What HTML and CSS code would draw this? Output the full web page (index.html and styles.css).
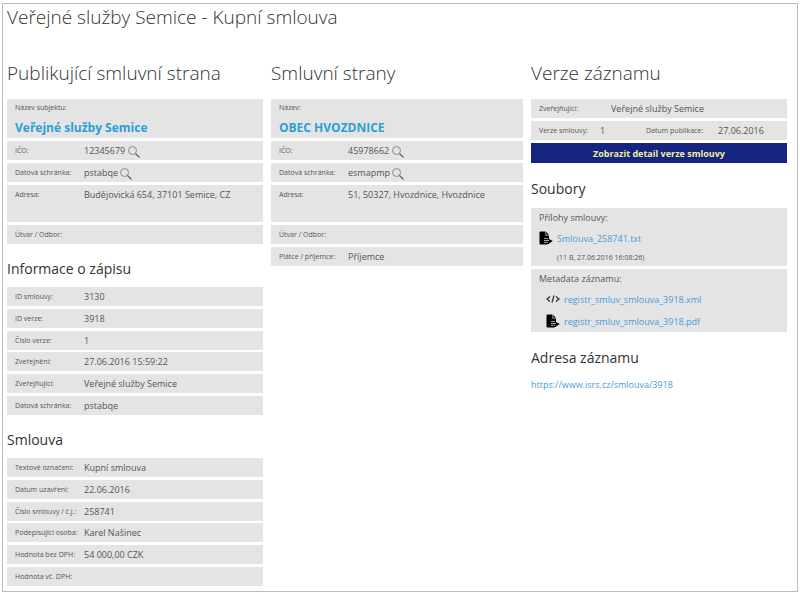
FILE: index.html
```html
<!DOCTYPE html>
<html lang="cs">
<head>
    <meta charset="UTF-8">
    <meta name="viewport" content="width=device-width, initial-scale=1.0">
    <title>Veřejné služby Semice - Kupní smlouva</title>
    <link rel="stylesheet" href="styles.css">
</head>
<body>
    <svg class="sprite" aria-hidden="true">
        <symbol id="lupa" viewBox="0 0 14 14">
            <circle cx="5.5" cy="5.5" r="4" fill="none" stroke="#888" stroke-width="1"/>
            <path d="M8.5 8.5L12.5 12.5" fill="none" stroke="#666" stroke-width="1.3"/>
        </symbol>
        <symbol id="soubor" viewBox="0 0 14 14">
            <path d="M1.5 0.5H6.5V4.5H10V6H6V12H8.5V13.5H1.5Q0.5 13.5 0.5 12.5V1.5Q0.5 0.5 1.5 0.5Z" fill="#000"/>
            <path d="M7.2 0.8L9.8 3.8H7.2Z" fill="#000"/>
            <path d="M5 6H10V8L13.8 10L10 12.6V13H5Z" fill="#000"/>
            <path d="M5 7.5H9M5 9.5H10M5 11.3H9" stroke="#e4e4e4" stroke-width="0.7"/>
        </symbol>
        <symbol id="kod" viewBox="0 0 14 10">
            <path d="M4 2.5L1 5L4 7.5M10 2.5L13 5L10 7.5M8 1.5L6 8.5" fill="none" stroke="#333" stroke-width="1.3"/>
        </symbol>
    </svg>

    <main class="page">
        <h1>Veřejné služby Semice - Kupní smlouva</h1>

        <div class="columns">
            <section>
                <h2>Publikující smluvní strana</h2>
                <dl>
                    <div class="subject">
                        <dt>Název subjektu:</dt>
                        <dd>Veřejné služby Semice</dd>
                    </div>
                    <div class="row">
                        <dt>IČO:</dt>
                        <dd>12345679 <a href="#" aria-label="Hledat podle IČO"><svg class="lupa"><use href="#lupa"/></svg></a></dd>
                    </div>
                    <div class="row">
                        <dt>Datová schránka:</dt>
                        <dd>pstabqe <a href="#" aria-label="Hledat podle schránky"><svg class="lupa"><use href="#lupa"/></svg></a></dd>
                    </div>
                    <div class="row tall">
                        <dt>Adresa:</dt>
                        <dd>Budějovická 654, 37101 Semice, CZ</dd>
                    </div>
                    <div class="row">
                        <dt>Útvar / Odbor:</dt>
                        <dd></dd>
                    </div>
                </dl>

                <h3>Informace o zápisu</h3>
                <dl class="info">
                    <div class="row">
                        <dt>ID smlouvy:</dt>
                        <dd>3130</dd>
                    </div>
                    <div class="row">
                        <dt>ID verze:</dt>
                        <dd>3918</dd>
                    </div>
                    <div class="row">
                        <dt>Číslo verze:</dt>
                        <dd>1</dd>
                    </div>
                    <div class="row">
                        <dt>Zveřejnění:</dt>
                        <dd>27.06.2016 15:59:22</dd>
                    </div>
                    <div class="row">
                        <dt>Zveřejňující:</dt>
                        <dd>Veřejné služby Semice</dd>
                    </div>
                    <div class="row">
                        <dt>Datová schránka:</dt>
                        <dd>pstabqe</dd>
                    </div>
                </dl>

                <h3>Smlouva</h3>
                <dl class="info">
                    <div class="row">
                        <dt>Textové označení:</dt>
                        <dd>Kupní smlouva</dd>
                    </div>
                    <div class="row">
                        <dt>Datum uzavření:</dt>
                        <dd>22.06.2016</dd>
                    </div>
                    <div class="row">
                        <dt>Číslo smlouvy / č.j.:</dt>
                        <dd>258741</dd>
                    </div>
                    <div class="row">
                        <dt>Podepisující osoba:</dt>
                        <dd>Karel Našinec</dd>
                    </div>
                    <div class="row">
                        <dt>Hodnota bez DPH:</dt>
                        <dd>54 000,00 CZK</dd>
                    </div>
                    <div class="row">
                        <dt>Hodnota vč. DPH:</dt>
                        <dd></dd>
                    </div>
                </dl>
            </section>

            <section>
                <h2>Smluvní strany</h2>
                <dl>
                    <div class="subject">
                        <dt>Název:</dt>
                        <dd>OBEC HVOZDNICE</dd>
                    </div>
                    <div class="row">
                        <dt>IČO:</dt>
                        <dd>45978662 <a href="#" aria-label="Hledat podle IČO"><svg class="lupa"><use href="#lupa"/></svg></a></dd>
                    </div>
                    <div class="row">
                        <dt>Datová schránka:</dt>
                        <dd>esmapmp <a href="#" aria-label="Hledat podle schránky"><svg class="lupa"><use href="#lupa"/></svg></a></dd>
                    </div>
                    <div class="row tall">
                        <dt>Adresa:</dt>
                        <dd>51, 50327, Hvozdnice, Hvozdnice</dd>
                    </div>
                    <div class="row">
                        <dt>Útvar / Odbor:</dt>
                        <dd></dd>
                    </div>
                    <div class="row">
                        <dt>Plátce / příjemce:</dt>
                        <dd>Příjemce</dd>
                    </div>
                </dl>
            </section>

            <section class="side">
                <h2>Verze záznamu</h2>
                <dl>
                    <div class="row publisher">
                        <dt>Zveřejňující:</dt>
                        <dd>Veřejné služby Semice</dd>
                    </div>
                    <div class="row pair">
                        <dt>Verze smlouvy:</dt>
                        <dd>1</dd>
                        <dt>Datum publikace:</dt>
                        <dd>27.06.2016</dd>
                    </div>
                </dl>
                <button type="button" class="detail">Zobrazit detail verze smlouvy</button>

                <h3>Soubory</h3>
                <div class="files">
                    <p>Přílohy smlouvy:</p>
                    <div class="file">
                        <svg class="icon"><use href="#soubor"/></svg>
                        <a href="#">Smlouva_258741.txt</a>
                    </div>
                    <small>(11 B, 27.06.2016 16:08:26)</small>
                </div>
                <div class="files">
                    <p>Metadata záznamu:</p>
                    <ul>
                        <li class="file">
                            <svg class="icon code"><use href="#kod"/></svg>
                            <a href="#">registr_smluv_smlouva_3918.xml</a>
                        </li>
                        <li class="file">
                            <svg class="icon"><use href="#soubor"/></svg>
                            <a href="#">registr_smluv_smlouva_3918.pdf</a>
                        </li>
                    </ul>
                </div>

                <h3>Adresa záznamu</h3>
                <a class="address" href="#">https://www.isrs.cz/smlouva/3918</a>
            </section>
        </div>
    </main>
</body>
</html>
```

FILE: styles.css
```css
* {
    box-sizing: border-box;
}
body {
    margin: 3px 2px 2px;
    background-color: #fff;
    color: #555;
    font-family: "Open Sans", "Noto Sans", sans-serif;
    font-size: 9px;
    line-height: 19px;
}
.sprite {
    display: none;
}
.page {
    min-height: calc(100vh - 5px);
    border: 1px solid #bbb;
    padding: 0 10px 4px 4px;
}
h1, h2, h3, p, dl, dd, ul {
    margin: 0;
    padding: 0;
}
h1, h2 {
    font-size: 19px;
    font-weight: 300;
    line-height: 26px;
    color: #333;
}
h2 {
    margin: 30px 0 13px;
}
h3 {
    font-size: 14px;
    font-weight: 400;
    line-height: 20px;
    margin: 15px 0 8px;
    color: #333;
}
a {
    color: #4a9bd8;
    text-decoration: none;
}
ul {
    list-style: none;
}
.columns {
    display: grid;
    grid-template-columns: 64fr 63fr 64fr;
    gap: 8px;
}
dl {
    display: grid;
    gap: 3px;
}
dl.info {
    height: 128px;
    gap: 0;
    align-content: space-between;
}
dt {
    font-size: 7px;
    white-space: nowrap;
}

/* grey rows with label and value */
.row {
    display: grid;
    grid-template-columns: 69px 1fr;
    height: 19px;
    padding-left: 8px;
    background-color: #e4e4e4;
}
.row.tall {
    height: 37px;
}
.row.publisher {
    grid-template-columns: 72px 1fr;
}
.row.pair {
    grid-template-columns: 61px 46px 72px 1fr;
}
.subject {
    height: 39px;
    padding-left: 8px;
    background-color: #e4e4e4;
}
.subject dt {
    line-height: 17px;
}
.subject dd {
    font-size: 12px;
    font-weight: 700;
    line-height: 23px;
    color: #2c9fd6;
}
.lupa {
    width: 14px;
    height: 14px;
    margin-left: -1px;
    vertical-align: middle;
}

.detail {
    display: block;
    width: 100%;
    height: 20px;
    margin-top: 3px;
    padding: 0;
    border: none;
    background-color: #14247f;
    color: #f4ee9c;
    font-family: inherit;
    font-size: 9px;
    font-weight: 700;
    cursor: pointer;
}
.side h3 {
    margin: 16px 0 9px;
}
.files {
    margin-bottom: 3px;
    padding: 0 8px;
    background-color: #e4e4e4;
}
.file {
    display: flex;
    align-items: center;
    gap: 4px;
    height: 22px;
}
.files ul {
    padding: 0 0 0 7px;
}
.files small {
    display: block;
    padding-left: 18px;
    font-size: 7px;
    line-height: 17px;
}
.icon {
    width: 14px;
    height: 14px;
}
.icon.code {
    height: 10px;
}
.address {
    display: block;
    line-height: 15px;
}
```
